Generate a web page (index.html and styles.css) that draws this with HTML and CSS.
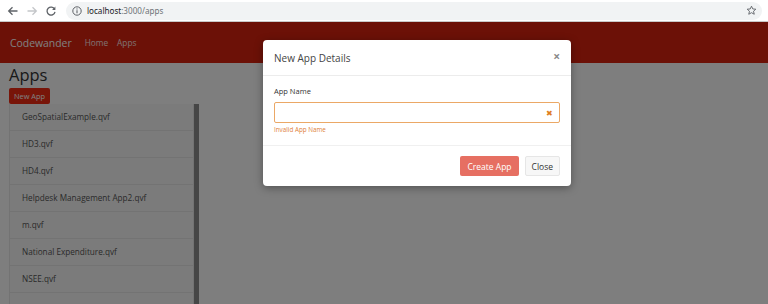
FILE: index.html
```html
<!DOCTYPE html>
<html lang="en">

<head>
    <meta charset="UTF-8">
    <title>Apps - Codewander</title>
    <link rel="stylesheet" href="styles.css">
</head>

<body>
    <!-- Browser toolbar -->
    <div class="browser-bar">
        <div class="browser-nav">
            <svg class="nav-icon" width="12" height="12" viewBox="0 0 12 12"><path d="M10.5 6H2M5.5 2.2L1.7 6l3.8 3.8" fill="none" stroke="#5f6368" stroke-width="1.3"/></svg>
            <svg class="nav-icon" width="12" height="12" viewBox="0 0 12 12"><path d="M1.5 6H10M6.5 2.2L10.3 6 6.5 9.8" fill="none" stroke="#c4c6c9" stroke-width="1.3"/></svg>
            <svg class="nav-icon" width="12" height="12" viewBox="0 0 12 12"><path d="M9.6 4.2A4 4 0 1 0 10 6.8" fill="none" stroke="#5f6368" stroke-width="1.3"/><path d="M10.4 1.6v3.3H7.1z" fill="#5f6368"/></svg>
        </div>
        <div class="address">
            <svg width="10" height="10" viewBox="0 0 10 10"><circle cx="5" cy="5" r="4.2" fill="none" stroke="#5f6368" stroke-width="1"/><path d="M5 4.3v3" stroke="#5f6368" stroke-width="1.1"/><circle cx="5" cy="2.9" r="0.6" fill="#5f6368"/></svg>
            <span class="url"><span class="host">localhost</span>:3000/apps</span>
            <svg class="star" width="11" height="11" viewBox="0 0 12 12"><path d="M6 1.3l1.4 3 3.3.3-2.5 2.2.8 3.3L6 8.4 3 10.1l.8-3.3L1.3 4.6l3.3-.3z" fill="none" stroke="#5f6368" stroke-width="1"/></svg>
        </div>
    </div>

    <div class="page">
        <nav class="navbar">
            <div class="brand">Codewander</div>
            <a class="nav-link" href="#">Home</a>
            <a class="nav-link" href="#">Apps</a>
        </nav>

        <div class="content">
            <h3 class="title">Apps</h3>
            <button class="btn btn-new">New App</button>
            <div class="app-list">
                <div class="list-item">GeoSpatialExample.qvf</div>
                <div class="list-item">HD3.qvf</div>
                <div class="list-item">HD4.qvf</div>
                <div class="list-item">Helpdesk Management App2.qvf</div>
                <div class="list-item">m.qvf</div>
                <div class="list-item">National Expenditure.qvf</div>
                <div class="list-item">NSEE.qvf</div>
                <div class="list-item"></div>
            </div>
        </div>

        <!-- New App modal -->
        <div class="backdrop"></div>
        <div class="modal">
            <div class="modal-header">
                <span class="modal-title">New App Details</span>
                <span class="close">&times;</span>
            </div>
            <div class="modal-body">
                <label class="label" for="app-name">App Name</label>
                <div class="input-wrap">
                    <input class="input" type="text" id="app-name">
                    <span class="input-icon">&#10006;</span>
                </div>
                <div class="help">Invalid App Name</div>
            </div>
            <div class="modal-footer">
                <button class="btn btn-create">Create App</button>
                <button class="btn btn-close">Close</button>
            </div>
        </div>
    </div>
</body>

</html>
```

FILE: styles.css
```css
body {
    margin: 0;
    padding: 0;
    font-family: 'Open Sans', 'Noto Sans', sans-serif;
    background-color: #fcfcfc;
    color: #333333;
    width: 768px;
    height: 304px;
    overflow: hidden;
}

.browser-bar {
    height: 21px;
    background-color: #ffffff;
    border-bottom: 1px solid #c8c8c8;
    display: flex;
    align-items: center;
}

.browser-nav {
    display: flex;
    align-items: center;
    gap: 7px;
    padding-left: 7px;
    width: 59px;
}

.nav-icon {
    display: block;
}

.address {
    flex: 1;
    height: 18px;
    margin-right: 6px;
    background-color: #f1f3f4;
    border-radius: 9px;
    display: flex;
    align-items: center;
    padding-left: 6px;
    padding-right: 5px;
}

.url {
    margin-left: 5px;
    font-family: 'Noto Sans', sans-serif;
    font-size: 8.1px;
    color: #6f7378;
    flex: 1;
}

.host {
    color: #202124;
}

.page {
    position: relative;
    height: 282px;
    overflow: hidden;
}

.navbar {
    height: 41px;
    background-color: #d9230f;
    display: flex;
    align-items: center;
    padding-left: 10px;
}

.brand {
    font-size: 10.4px;
    color: #ffffff;
    margin-right: 13px;
}

.nav-link {
    font-size: 8.3px;
    color: #fde3e0;
    text-decoration: none;
    margin-right: 9px;
}

.content {
    padding-left: 9px;
}

.title {
    margin: 0;
    padding-top: 1px;
    font-size: 16.5px;
    font-weight: 400;
    line-height: 22px;
    color: #333333;
}

.btn {
    font-family: 'Open Sans', sans-serif;
    border-radius: 2px;
    cursor: pointer;
}

.btn-new {
    display: block;
    margin-top: 2px;
    height: 16px;
    padding: 0 5px;
    font-size: 7.4px;
    color: #ffffff;
    background-color: #f02a12;
    border: none;
}

.app-list {
    width: 185px;
    border-right: 5px solid #8c8c8c;
}

.list-item {
    height: 26px;
    line-height: 26px;
    padding-left: 12px;
    font-size: 8.2px;
    color: #555555;
    background-color: #f7f7f7;
    border: 1px solid #e6e6e6;
    border-top: none;
}

.backdrop {
    position: absolute;
    top: 0;
    left: 0;
    width: 100%;
    height: 100%;
    background-color: rgba(0, 0, 0, 0.5);
}

.modal {
    position: absolute;
    top: 18px;
    left: 263px;
    width: 308px;
    background-color: #ffffff;
    border-radius: 4px;
    box-shadow: 0 2px 8px rgba(0, 0, 0, 0.35);
}

.modal-header {
    height: 35px;
    padding: 0 11px;
    display: flex;
    align-items: center;
    justify-content: space-between;
    border-bottom: 1px solid #ececec;
}

.modal-title {
    font-size: 10px;
    color: #444444;
}

.close {
    font-size: 12px;
    font-weight: bold;
    color: #8a8a8a;
    margin-top: -3px;
}

.modal-body {
    padding: 10px 11px 11px;
    border-bottom: 1px solid #f0f0f0;
}

.label {
    display: block;
    font-size: 7.5px;
    color: #333333;
    line-height: 10px;
    margin-bottom: 6px;
}

.input-wrap {
    position: relative;
}

.input {
    display: block;
    box-sizing: border-box;
    width: 100%;
    height: 21px;
    border: 1px solid #eba866;
    border-radius: 2px;
    outline: none;
}

.input-icon {
    position: absolute;
    right: 7px;
    top: 5px;
    font-size: 8px;
    color: #e07e1c;
}

.help {
    font-size: 6.3px;
    color: #e0823a;
    margin-top: 3px;
    line-height: 8px;
}

.modal-footer {
    padding: 10px 11px 10px;
    display: flex;
    justify-content: flex-end;
    gap: 6px;
}

.btn-create {
    height: 20px;
    padding: 0 7px;
    font-size: 8.5px;
    color: #ffffff;
    background-color: #e66f62;
    border: none;
}

.btn-close {
    height: 20px;
    padding: 0 6px;
    font-size: 8.5px;
    color: #333333;
    background-color: #f7f7f7;
    border: 1px solid #e6e6e6;
}
```
